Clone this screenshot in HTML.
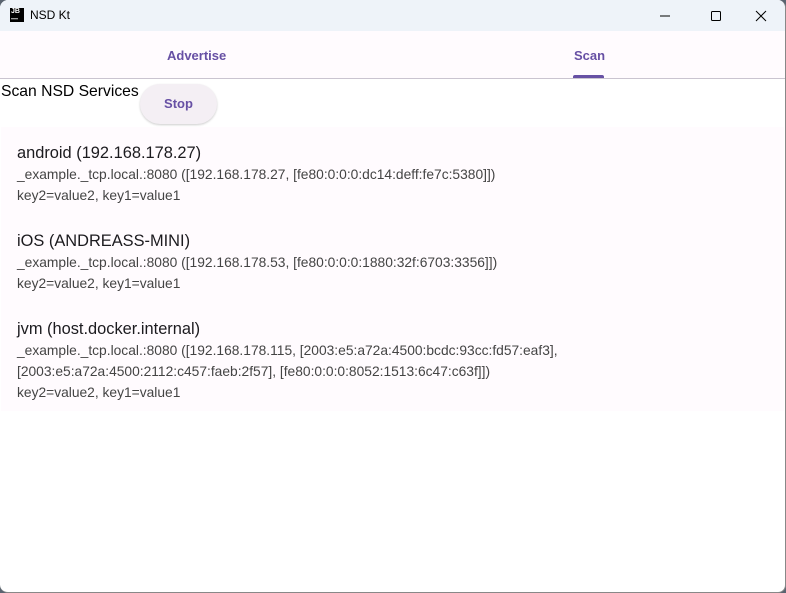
<!DOCTYPE html>
<html><head><style>
body{margin:0;width:786px;height:593px;overflow:hidden;background:#5a6470;font-family:"Liberation Sans","DejaVu Sans",sans-serif;}
.win{position:absolute;left:0;top:0;width:785px;height:592px;background:#fff;border-radius:8px;overflow:hidden;border-right:1px solid #888;border-bottom:1px solid #888;}
.tb{height:31px;background:#eef3f9;position:relative;}
.logo{position:absolute;left:10px;top:8px;width:14px;height:14px;background:#000;color:#fff;font-size:7px;font-weight:bold;line-height:8px;padding-left:1px;box-sizing:border-box;}
.title{position:absolute;left:30px;top:8px;font-size:12px;color:#000;}
.tabs{height:47px;background:#fffbfe;border-bottom:1px solid #cac4d0;position:relative;}
.tab{position:absolute;top:17px;font-size:13px;font-weight:bold;color:#6750a4;}
.ind{position:absolute;left:573px;top:44px;width:31px;height:3px;background:#6750a4;border-radius:2px 2px 0 0;}
.hdr{position:absolute;left:1px;top:83px;font-size:15.7px;color:#000;}
.stop{position:absolute;left:140px;top:84px;width:77px;height:40px;border-radius:20px;background:#f4eff4;box-shadow:0 1px 2px rgba(0,0,0,.2);color:#6750a4;font-weight:bold;font-size:13px;text-align:center;line-height:40px;}
.card{position:absolute;left:1px;top:127px;width:783px;height:284px;background:#fffbfe;}
.e{position:absolute;left:16px;color:#333;}
.e .n{font-size:16.4px;color:#1c1b1f;line-height:22px;}
.e .l{font-size:13.8px;line-height:21px;color:#444;}
</style></head><body><div class="win">
<div class="tb"><div class="logo">JB<br>—</div><div class="title">NSD Kt</div>
<svg style="position:absolute;left:660px;top:9px" width="110" height="14"><line x1="0" y1="7" x2="10" y2="7" stroke="#000"/><rect x="51.5" y="2.5" width="9" height="9" rx="1" fill="none" stroke="#000"/><path d="M96 2L106 12M106 2L96 12" stroke="#000"/></svg></div>
<div class="tabs"><div class="tab" style="left:167px">Advertise</div><div class="tab" style="left:574px">Scan</div><div class="ind"></div></div>
<div class="hdr">Scan NSD Services</div>
<div class="stop">Stop</div>
<div class="card">
<div class="e" style="top:15px"><div class="n">android (192.168.178.27)</div><div class="l">_example._tcp.local.:8080 ([192.168.178.27, [fe80:0:0:0:dc14:deff:fe7c:5380]])</div><div class="l">key2=value2, key1=value1</div></div>
<div class="e" style="top:103px"><div class="n">iOS (ANDREASS-MINI)</div><div class="l">_example._tcp.local.:8080 ([192.168.178.53, [fe80:0:0:0:1880:32f:6703:3356]])</div><div class="l">key2=value2, key1=value1</div></div>
<div class="e" style="top:191px"><div class="n">jvm (host.docker.internal)</div><div class="l">_example._tcp.local.:8080 ([192.168.178.115, [2003:e5:a72a:4500:bcdc:93cc:fd57:eaf3],<br>[2003:e5:a72a:4500:2112:c457:faeb:2f57], [fe80:0:0:0:8052:1513:6c47:c63f]])</div><div class="l">key2=value2, key1=value1</div></div>
</div>
</div></body></html>
